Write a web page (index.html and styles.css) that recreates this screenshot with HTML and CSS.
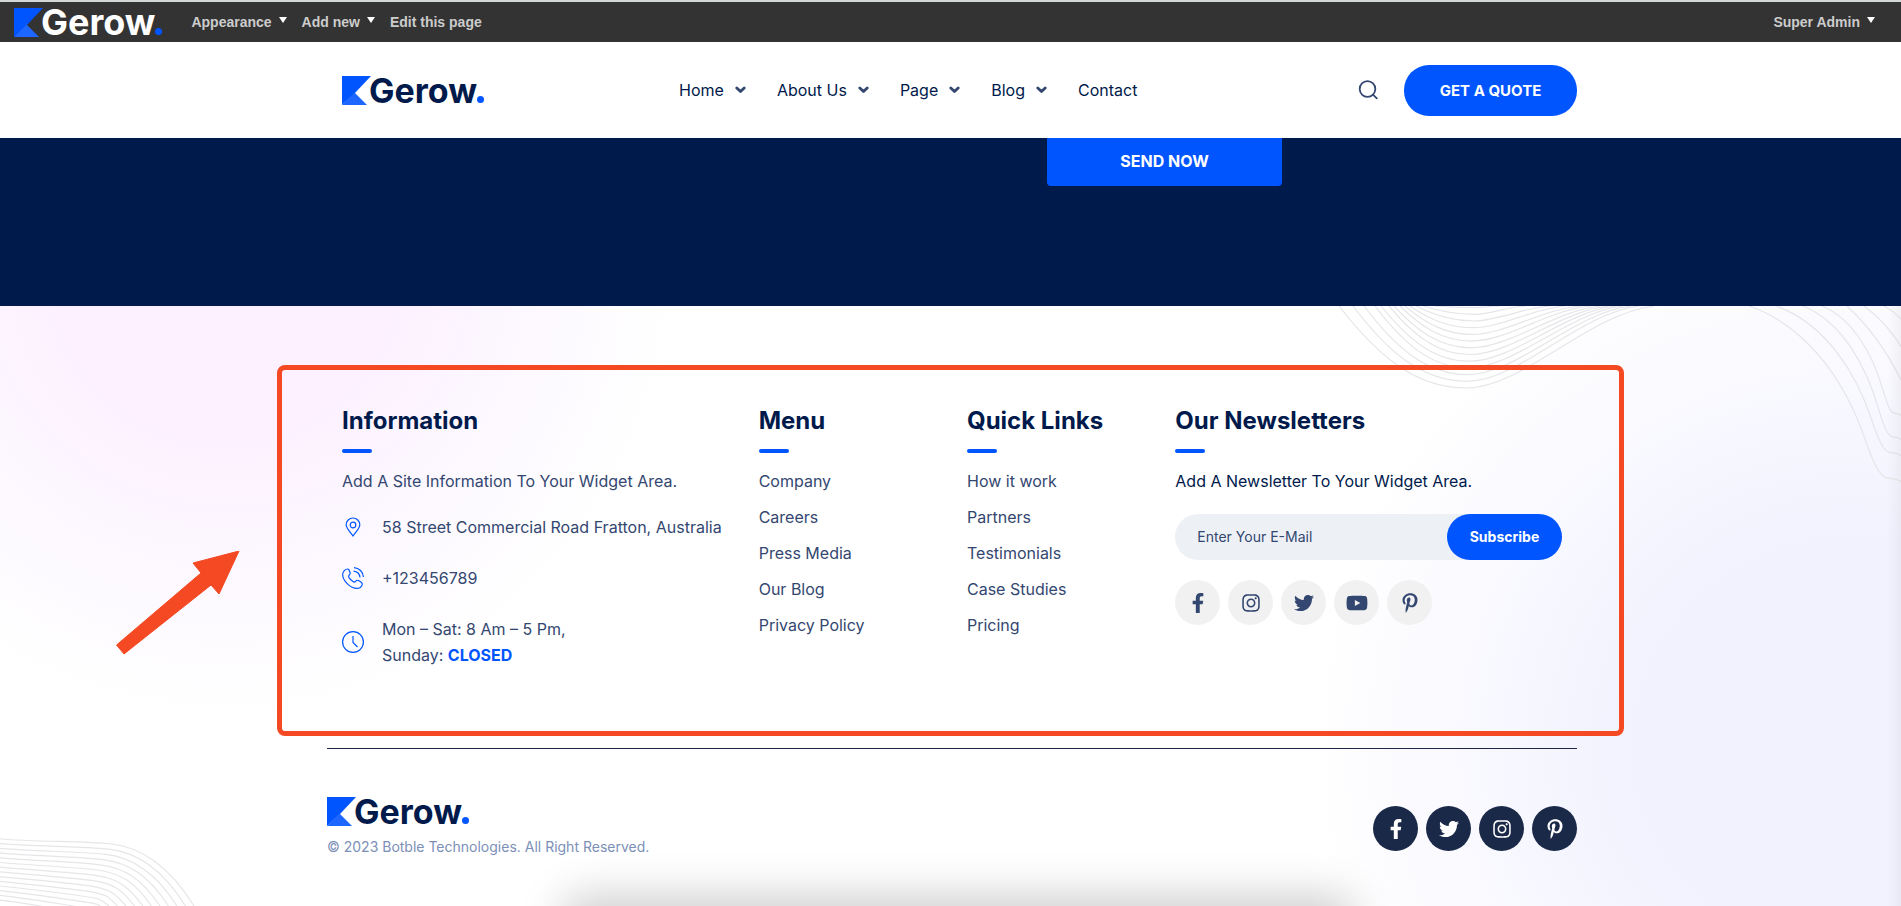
FILE: index.html
```html
<!DOCTYPE html>
<html lang="en">
<head>
<meta charset="utf-8">
<meta name="viewport" content="width=device-width, initial-scale=1">
<title>Gerow</title>
<link rel="stylesheet" href="styles.css">
</head>
<body>
<svg class="sprite" aria-hidden="true">
  <symbol id="mark" viewBox="0 0 29 29"><path fill="#0055ff" d="M0 0h29L13 17 0 29z"/><path fill="#1d66ff" d="M12.500 16.500 25 29H0z"/></symbol>
  <symbol id="chevron" viewBox="0 0 11 8"><path fill="none" stroke="currentColor" stroke-width="2.800" stroke-linecap="round" stroke-linejoin="round" d="M1.800 2 5.500 5.600 9.200 2"/></symbol>
  <symbol id="facebook" viewBox="0 0 320 512"><path fill="currentColor" d="M279.140 288l14.220-92.660h-88.910v-60.130c0-25.350 12.420-50.060 52.240-50.060h40.420V6.260S260.430 0 225.360 0c-73.220 0-121.080 44.380-121.080 124.720v70.620H22.890V288h81.390v224h100.170V288z"/></symbol>
  <symbol id="twitter" viewBox="0 0 512 512"><path fill="currentColor" d="M459.370 151.716c.325 4.548.325 9.097.325 13.645 0 138.720-105.583 298.558-298.558 298.558-59.452 0-114.680-17.219-161.137-47.106 8.447.974 16.568 1.299 25.340 1.299 49.055 0 94.213-16.568 130.274-44.832-46.132-.975-84.792-31.188-98.112-72.772 6.498.974 12.995 1.624 19.818 1.624 9.421 0 18.843-1.300 27.614-3.573-48.081-9.747-84.143-51.980-84.143-102.985v-1.299c13.969 7.797 30.214 12.670 47.431 13.319-28.264-18.843-46.781-51.005-46.781-87.391 0-19.492 5.197-37.360 14.294-52.954 51.655 63.675 129.300 105.258 216.365 109.807-1.624-7.797-2.599-15.918-2.599-24.040 0-57.828 46.782-104.934 104.934-104.934 30.213 0 57.502 12.670 76.670 33.137 23.715-4.548 46.456-13.320 66.599-25.340-7.798 24.366-24.366 44.833-46.132 57.827 21.117-2.273 41.584-8.122 60.426-16.243-14.292 20.791-32.161 39.308-52.628 54.253z"/></symbol>
  <symbol id="instagram" viewBox="0 0 448 512"><path fill="currentColor" d="M224.100 141c-63.600 0-114.900 51.300-114.900 114.900s51.300 114.900 114.900 114.900S339 319.500 339 255.900 287.700 141 224.100 141zm0 189.600c-41.100 0-74.700-33.500-74.700-74.700s33.500-74.700 74.700-74.700 74.700 33.500 74.700 74.700-33.600 74.700-74.700 74.700zm146.400-194.300c0 14.900-12 26.800-26.800 26.800-14.900 0-26.800-12-26.800-26.800s12-26.800 26.800-26.800 26.800 12 26.800 26.800zm76.100 27.200c-1.700-35.900-9.900-67.700-36.200-93.900-26.200-26.200-58-34.400-93.900-36.200-37-2.100-147.900-2.100-184.900 0-35.800 1.700-67.600 9.900-93.900 36.100s-34.400 58-36.200 93.900c-2.100 37-2.100 147.900 0 184.900 1.700 35.900 9.900 67.700 36.200 93.900s58 34.400 93.900 36.200c37 2.100 147.900 2.100 184.900 0 35.900-1.700 67.700-9.900 93.900-36.200 26.200-26.200 34.400-58 36.200-93.900 2.100-37 2.100-147.800 0-184.800zM398.800 388c-7.800 19.600-22.900 34.700-42.600 42.600-29.500 11.700-99.500 9-132.100 9s-102.700 2.600-132.100-9c-19.600-7.800-34.700-22.900-42.600-42.600-11.700-29.500-9-99.500-9-132.100s-2.600-102.700 9-132.100c7.800-19.600 22.900-34.700 42.600-42.600 29.500-11.700 99.500-9 132.100-9s102.700-2.600 132.100 9c19.600 7.800 34.700 22.900 42.600 42.600 11.700 29.500 9 99.500 9 132.100s2.700 102.700-9 132.100z"/></symbol>
  <symbol id="youtube" viewBox="0 0 576 512"><path fill="currentColor" d="M549.655 124.083c-6.281-23.650-24.787-42.276-48.284-48.597C458.781 64 288 64 288 64S117.220 64 74.629 75.486c-23.497 6.322-42.003 24.947-48.284 48.597-11.412 42.867-11.412 132.305-11.412 132.305s0 89.438 11.412 132.305c6.281 23.650 24.787 41.500 48.284 47.821C117.220 448 288 448 288 448s170.780 0 213.371-11.486c23.497-6.321 42.003-24.171 48.284-47.821 11.412-42.867 11.412-132.305 11.412-132.305s0-89.438-11.412-132.305zm-317.510 213.508V175.185l142.739 81.205-142.739 81.201z"/></symbol>
  <symbol id="pinterest" viewBox="0 0 384 512"><path fill="currentColor" d="M204 6.500C101.400 6.500 0 74.900 0 185.600 0 256 39.600 296 63.600 296c9.900 0 15.600-27.600 15.600-35.400 0-9.300-23.700-29.100-23.700-67.800 0-80.400 61.200-137.400 140.400-137.400 68.100 0 118.500 38.700 118.500 109.800 0 53.100-21.300 152.700-90.300 152.700-24.900 0-46.200-18-46.200-43.800 0-37.800 26.400-74.400 26.400-113.400 0-66.200-93.900-54.200-93.900 25.800 0 16.800 2.100 35.400 9.600 50.700-13.800 59.400-42 147.900-42 209.100 0 18.900 2.700 37.500 4.500 56.400 3.400 3.800 1.700 3.400 6.900 1.500 50.400-69 48.600-82.500 71.400-172.800 12.300 23.400 44.100 36 69.300 36 106.200 0 153.900-103.500 153.900-196.800C384 71.300 298.200 6.500 204 6.500z"/></symbol>
</svg>

<nav class="admin-bar" aria-label="Admin">
  <a class="logo logo-light" href="#"><svg class="logo-mark" aria-hidden="true"><use href="#mark"/></svg><span>Gerow<b class="dot"></b></span></a>
  <button class="admin-item" type="button">Appearance<i class="caret"></i></button>
  <button class="admin-item" type="button">Add new<i class="caret"></i></button>
  <a class="admin-item" href="#">Edit this page</a>
  <button class="admin-item admin-user" type="button">Super Admin<i class="caret"></i></button>
</nav>

<header class="site-header">
  <div class="container header-row">
    <a class="logo" href="#"><svg class="logo-mark" aria-hidden="true"><use href="#mark"/></svg><span>Gerow<b class="dot"></b></span></a>
    <nav class="main-nav" aria-label="Main">
      <a href="#">Home<svg class="chevron"><use href="#chevron"/></svg></a>
      <a href="#">About Us<svg class="chevron"><use href="#chevron"/></svg></a>
      <a href="#">Page<svg class="chevron"><use href="#chevron"/></svg></a>
      <a href="#">Blog<svg class="chevron"><use href="#chevron"/></svg></a>
      <a href="#">Contact</a>
    </nav>
    <button class="search" type="button" aria-label="Search"><svg viewBox="0 0 20 20" width="20" height="20" fill="none" stroke="currentColor" stroke-width="1.800" stroke-linecap="round"><circle cx="9.500" cy="9" r="7.800"/><path d="m15 14.600 3.800 3.800"/></svg></button>
    <a class="quote" href="#">GET A QUOTE</a>
  </div>
</header>

<main class="contact-band">
  <div class="container"><button class="send" type="submit">SEND NOW</button></div>
</main>

<footer class="site-footer">
  <svg class="waves waves-top" viewBox="0 0 600 240" id="waves-top" aria-hidden="true"></svg>
  <svg class="waves waves-bottom" viewBox="0 0 200 70" id="waves-bottom" aria-hidden="true"></svg>
  <div class="container footer-body">
    <div class="widgets">
      <section class="widget">
        <h2>Information</h2>
        <p>Add A Site Information To Your Widget Area.</p>
        <ul class="contact-list">
          <li><svg class="info-icon" viewBox="0 0 22 22"><path d="M11 20C8 15.500 4.200 12.500 4.200 8.800a6.800 6.800 0 0 1 13.600 0C17.800 12.500 14 15.500 11 20z"/><circle cx="11" cy="9" r="2.800"/></svg><span>58 Street Commercial Road Fratton, Australia</span></li>
          <li><svg class="info-icon" viewBox="0 0 22 22"><path d="M5.500 2C3.500 2 .6 4.500.6 7.500.8 14 8.500 21.300 15 21.400c2.500 0 4.500-1.700 5.200-3.500.4-1.200-.2-2-1-2.600l-2.700-1.700c-1-.6-2-.3-2.700.5-.8 1-1.800 1.200-2.800.5-1.500-1-3-2.500-4-4-.7-1-.5-2 .5-2.800.8-.7 1-1.700.4-2.700L6.900 2.800C6.500 2.200 6 2 5.500 2zM12 .6c5.200.3 9.100 4.200 9.400 9.400M11.600 4.200c3.500.4 6 2.900 6.400 6.300"/></svg><span>+123456789</span></li>
          <li><svg class="info-icon" viewBox="0 0 22 22"><circle cx="11" cy="11" r="10.400"/><path d="M11 5v6.500l4.500 4.500"/></svg><span>Mon – Sat: 8 Am – 5 Pm,<br>Sunday: <strong>CLOSED</strong></span></li>
        </ul>
      </section>
      <section class="widget">
        <h2>Menu</h2>
        <ul class="links"><li><a href="#">Company</a></li><li><a href="#">Careers</a></li><li><a href="#">Press Media</a></li><li><a href="#">Our Blog</a></li><li><a href="#">Privacy Policy</a></li></ul>
      </section>
      <section class="widget">
        <h2>Quick Links</h2>
        <ul class="links"><li><a href="#">How it work</a></li><li><a href="#">Partners</a></li><li><a href="#">Testimonials</a></li><li><a href="#">Case Studies</a></li><li><a href="#">Pricing</a></li></ul>
      </section>
      <section class="widget">
        <h2>Our Newsletters</h2>
        <p class="strong-text"><label for="email">Add A Newsletter To Your Widget Area.</label></p>
        <form class="subscribe"><input id="email" type="email" placeholder="Enter Your E-Mail"><button type="submit">Subscribe</button></form>
        <div class="social">
          <a href="#" aria-label="Facebook"><svg><use href="#facebook"/></svg></a>
          <a href="#" aria-label="Instagram"><svg><use href="#instagram"/></svg></a>
          <a href="#" aria-label="Twitter"><svg><use href="#twitter"/></svg></a>
          <a href="#" aria-label="YouTube"><svg><use href="#youtube"/></svg></a>
          <a href="#" aria-label="Pinterest"><svg><use href="#pinterest"/></svg></a>
        </div>
      </section>
    </div>
    <div class="highlight"></div>
    <svg class="arrow" viewBox="0 0 124 104" aria-hidden="true"><path fill="#f54924" stroke="#f54924" stroke-width="1" stroke-linejoin="round" d="M.5 94 85 22l-8-10 46-12-20 43-8-9L8 103z"/></svg>
    <div class="footer-bottom">
      <div>
        <a class="logo" href="#"><svg class="logo-mark" aria-hidden="true"><use href="#mark"/></svg><span>Gerow<b class="dot"></b></span></a>
        <p class="copyright">© 2023 Botble Technologies. All Right Reserved.</p>
      </div>
      <div class="social social-dark">
        <a href="#" aria-label="Facebook"><svg><use href="#facebook"/></svg></a>
        <a href="#" aria-label="Twitter"><svg><use href="#twitter"/></svg></a>
        <a href="#" aria-label="Instagram"><svg><use href="#instagram"/></svg></a>
        <a href="#" aria-label="Pinterest"><svg><use href="#pinterest"/></svg></a>
      </div>
    </div>
  </div>
  <div class="dock-shadow"></div>
  <div class="edge-shade"></div>
</footer>
<script src="waves.js"></script>
</body>
</html>
```

FILE: styles.css
```css
* { box-sizing: border-box; }
body {
  margin: 0;
  min-height: 100vh;
  display: flex;
  flex-direction: column;
  overflow-x: hidden;
  font: 400 16px/26px Inter, "Open Sans", sans-serif;
  color: #334770;
  background: #fff;
}
a { color: inherit; text-decoration: none; }
button { border: 0; background: none; padding: 0; font: inherit; color: inherit; cursor: pointer; }
ul { list-style: none; margin: 0; padding: 0; }
h2, p { margin: 0; }
.sprite { position: absolute; width: 0; height: 0; }
.container { width: 100%; max-width: 1253px; margin: 0 auto; padding-left: 3px; }

.logo { display: flex; align-items: center; height: 29px; color: #001a4b; font: 700 34px/29px Inter, sans-serif; }
.logo-mark { width: 29px; height: 29px; margin-right: -2px; }
.logo-light { color: #fff; font-size: 36px; }
.dot { display: inline-block; width: 7px; height: 7px; border-radius: 50%; background: #0055ff; }

.admin-bar {
  display: flex;
  align-items: center;
  height: 42px;
  padding: 0 26px 0 14px;
  border-top: 2px solid #d3d7d8;
  background: #333;
  color: #ccc;
  font: 700 14px/20px "Liberation Sans", Arial, sans-serif;
}
.admin-bar .logo { margin-right: 29px; }
.admin-item { display: flex; gap: 7px; margin-right: 15px; }
.caret { margin-top: 5px; width: 0; height: 0; border: 4px solid transparent; border-top: 6px solid #fff; border-bottom: 0; }
.admin-user { margin: 0 0 0 auto; }

.site-header { background: #fff; color: #001a4b; }
.header-row { display: flex; align-items: center; height: 96px; padding-left: 18px; }
.main-nav { display: flex; gap: 31px; margin-left: 195px; }
.main-nav a { display: flex; align-items: center; gap: 11px; }
.chevron { width: 11px; height: 8px; color: #334770; }
.search { display: flex; margin-left: auto; color: #334770; }
.quote { margin-left: 26px; width: 173px; border-radius: 25px; background: #0055ff; color: #fff; font: 700 15px/51px Inter, sans-serif; text-align: center; }

.contact-band { height: 168px; background: #001a4b; }
.send { display: block; width: 235px; height: 48px; margin-left: 720px; padding-bottom: 2px; border-radius: 0 0 4px 4px; background: #0055ff; color: #fff; font-weight: 700; }

.site-footer {
  position: relative;
  flex: 1;
  overflow: hidden;
  background:
    radial-gradient(circle 450px at 225px -40px, #fdf0ff 0 35%, #fcf7ff 62%, #fff0 100%),
    radial-gradient(ellipse 540px 520px at 1850px 440px, #f2f2ff 0 40%, #f9f9ff 72%, #fff0 100%),
    #fff;
}
.waves { position: absolute; fill: none; stroke: #e6e6e9; stroke-width: 1.2; }
.waves-top { top: 0; right: 0; width: 600px; height: 240px; }
.waves-bottom { left: 0; bottom: 0; width: 200px; height: 70px; }
.footer-body { position: relative; padding-top: 98px; }
.widgets { display: grid; grid-template-columns: 4fr 2fr 2fr 4fr; margin: 0 -15px 0 15px; min-height: 344px; }
.widget { padding-right: 30px; }
.widget:first-child { padding-right: 20px; }
h2 { color: #001a4b; font: 700 24px/34px Inter, sans-serif; white-space: nowrap; }
h2::after { content: ""; display: block; width: 30px; height: 4px; margin: 11px 0 15px; border-radius: 2px; background: #0055ff; }
.strong-text { color: #001a4b; }
.contact-list { display: grid; gap: 25px; margin-top: 20px; }
.contact-list li { display: flex; align-items: center; gap: 18px; white-space: nowrap; }
.info-icon { width: 22px; height: 22px; fill: none; stroke: #0055ff; stroke-width: 1.2; }
.contact-list strong { color: #0055ff; }
.links { display: grid; gap: 10px; white-space: nowrap; }
.subscribe { display: flex; height: 46px; margin: 20px 0; border-radius: 23px; background: #edf1f6; }
.subscribe input { flex: 1; min-width: 0; padding: 0 22px; border: 0; background: none; outline: 0; font: 400 14px/20px Inter, sans-serif; }
.subscribe input::placeholder { color: #334770; opacity: 1; }
.subscribe button { width: 115px; border-radius: 23px; background: #0055ff; color: #fff; font: 700 14px/20px Inter, sans-serif; }
.social { display: flex; gap: 8px; }
.social a { display: grid; place-items: center; width: 45px; height: 45px; border-radius: 50%; background: #f1f1f1; }
.social svg { width: 22px; height: 20px; }
.social-dark a { background: #1b2948; color: #fff; }
.highlight { position: absolute; top: 59px; left: -47px; right: -47px; height: 371px; border: 5px solid #f54924; border-radius: 8px; pointer-events: none; }
.arrow { position: absolute; top: 245px; left: -208px; width: 124px; height: 104px; }
.footer-bottom { display: flex; justify-content: space-between; align-items: center; padding-top: 48px; border-top: 1px solid #1b2948; }
.copyright { margin-top: 8px; color: #7c8fb7; font-size: 14px; }
.dock-shadow { position: absolute; left: 570px; right: 555px; bottom: -30px; height: 30px; border-radius: 20px; box-shadow: 0 0 44px 10px #0003; }
.edge-shade { position: absolute; top: 0; right: 0; bottom: 0; width: 14px; background: linear-gradient(90deg, #0000, #0000000a); }
```

FILE: waves.js
```javascript
// Draws the families of contour lines behind the footer.
function addPath(svg, d) {
  const path = document.createElementNS("http://www.w3.org/2000/svg", "path");
  path.setAttribute("d", d);
  svg.appendChild(path);
}

const topWaves = document.getElementById("waves-top");
const valleyStarts = [38, 52, 63, 74, 80, 88, 93, 99, 104, 109, 115, 122, 134];
const valleyEnds = [353, 338, 330, 322, 315, 308, 300, 290, 280, 265, 250, 225, 199];
valleyStarts.forEach((start, i) => {
  const end = valleyEnds[i];
  const depth = 82 - i * 6.7;
  const mid = 165 + i * 0.8;
  const left = mid - start;
  const right = end - mid;
  addPath(topWaves, `M${start} 0 C${start + left * 0.3} ${depth * 0.6} ${mid - left * 0.4} ${depth} ${mid} ${depth} C${mid + right * 0.3} ${depth} ${mid + right * 0.65} ${depth * 0.1} ${end} 0`);
});

const slopes = [[448, 176], [475, 150], [502, 134], [521, 110], [546, 76], [563, 42], [583, 14]];
slopes.forEach(([start, end], i) => {
  const width = 601 - start;
  if (i < 4) {
    const x = start + width * 0.76;
    const y = end * 0.76;
    addPath(topWaves, `M${start} 0 C${start + width * 0.4} ${end * 0.12} ${x - width * 0.12} ${y * 0.6} ${x} ${y} S${601 - width * 0.1} ${end * 0.94} 601 ${end}`);
  } else {
    addPath(topWaves, `M${start} 0 Q${start + width * 0.6} ${end * 0.4} 601 ${end}`);
  }
});

const bottomWaves = document.getElementById("waves-bottom");
for (let i = 0; i < 14; i++) {
  const y = 3 + i * 4.7;
  const x = 112 - i * 3;
  const kneeY = y + 5 + i * 0.5;
  const endX = 194 - i * 8.5;
  let d = `M0 ${y} C${x * 0.35} ${y + 3} ${x * 0.75} ${kneeY - 3} ${x} ${kneeY}`;
  if (kneeY < 66) {
    d += ` S${endX - (endX - x) * 0.3} ${kneeY + (70 - kneeY) * 0.35} ${endX} 70`;
  }
  addPath(bottomWaves, d);
}
```
